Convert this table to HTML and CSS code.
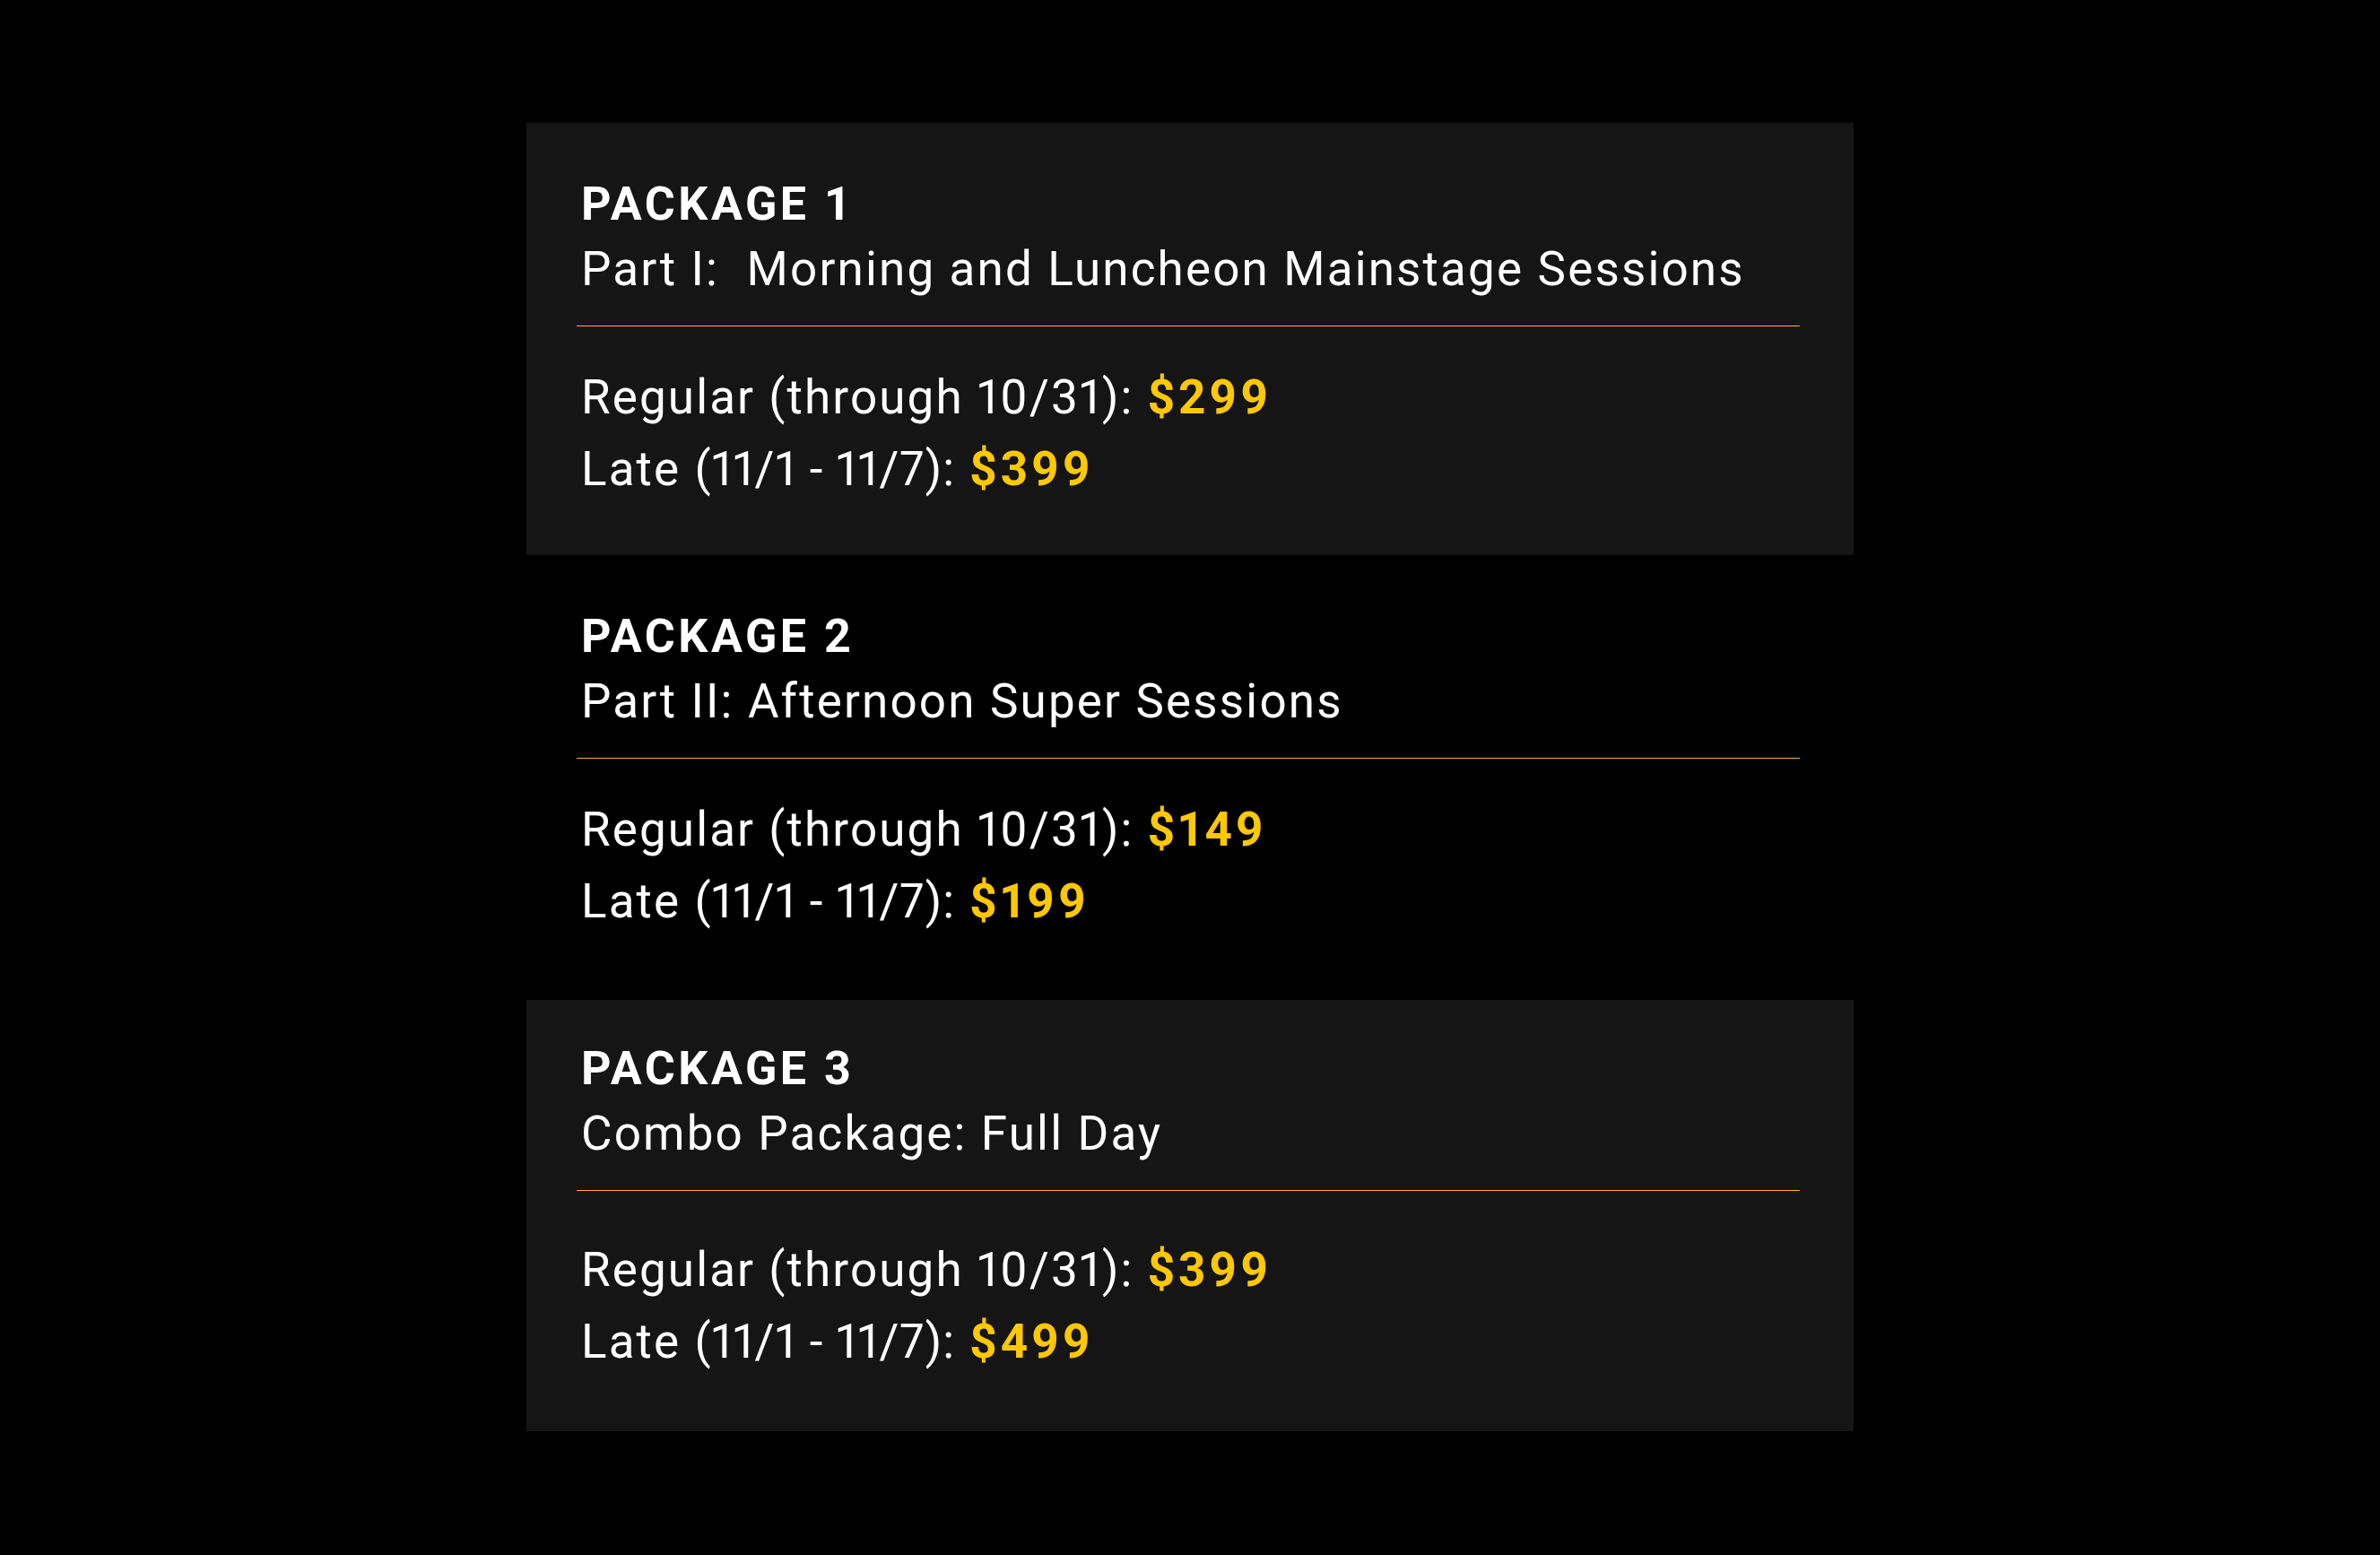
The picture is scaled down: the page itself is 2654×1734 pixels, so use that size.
FILE: index.html
```html
<!DOCTYPE html>
<html lang="en">
<head>
<meta charset="utf-8">
<title>Packages</title>
<link rel="stylesheet" href="styles.css">
</head>
<body>
<main class="packages">
  <section class="package package--shaded">
    <h2 class="package__title">PACKAGE 1</h2>
    <p class="package__subtitle">Part I:&nbsp; Morning and Luncheon Mainstage Sessions</p>
    <hr class="package__rule">
    <div class="package__prices">
      <p class="price-line">Regular (through 10/31): <strong class="price">$299</strong></p>
      <p class="price-line">Late <span class="range">(11/1 - 11/7)</span>: <strong class="price">$399</strong></p>
    </div>
  </section>
  <section class="package package--plain">
    <h2 class="package__title">PACKAGE 2</h2>
    <p class="package__subtitle">Part II: Afternoon Super Sessions</p>
    <hr class="package__rule">
    <div class="package__prices">
      <p class="price-line">Regular (through 10/31): <strong class="price">$149</strong></p>
      <p class="price-line">Late <span class="range">(11/1 - 11/7)</span>: <strong class="price">$199</strong></p>
    </div>
  </section>
  <section class="package package--shaded package--last">
    <h2 class="package__title">PACKAGE 3</h2>
    <p class="package__subtitle">Combo Package: Full Day</p>
    <hr class="package__rule">
    <div class="package__prices">
      <p class="price-line">Regular (through 10/31): <strong class="price">$399</strong></p>
      <p class="price-line">Late <span class="range">(11/1 - 11/7)</span>: <strong class="price">$499</strong></p>
    </div>
  </section>
</main>
</body>
</html>
```

FILE: styles.css
```css
html, body {
  margin: 0;
  padding: 0;
  background: #000;
}

body {
  font-family: Roboto, "Liberation Sans", Arial, sans-serif;
  color: #fff;
  min-height: 1734px;
}

.packages {
  width: 1480px;
  margin: 0 auto;
  padding-top: 137px;
  display: flex;
  flex-direction: column;
}

.package {
  padding: 55px 60px 56px 56px;
  display: flex;
  flex-direction: column;
}

.package--shaded {
  background: #151515;
}

.package--plain {
  padding-bottom: 70px;
}

.package--last {
  padding-top: 41px;
  padding-bottom: 60px;
}

.package__title {
  margin: 0;
  padding-left: 5px;
  font-size: 52px;
  line-height: 72px;
  font-weight: 700;
  letter-spacing: 3.5px;
}

.package__subtitle {
  margin: 0;
  padding-left: 5px;
  font-size: 53px;
  line-height: 72px;
  font-weight: 400;
  letter-spacing: 2.15px;
  font-variant-numeric: proportional-nums;
}

.package__rule {
  margin: 27px 0 0;
  border: 0;
  height: 1px;
  background: #eeb42a;
}

.package__prices {
  margin-top: 39px;
  padding-left: 5px;
}

.package--last .package__prices {
  margin-top: 48px;
}

.price-line {
  margin: 0;
  font-size: 53px;
  line-height: 80px;
  letter-spacing: 2.1px;
  font-variant-numeric: proportional-nums;
}

.range {
  letter-spacing: 1px;
}

.price {
  color: #ffc800;
  font-weight: 700;
  letter-spacing: 4px;
}
```
